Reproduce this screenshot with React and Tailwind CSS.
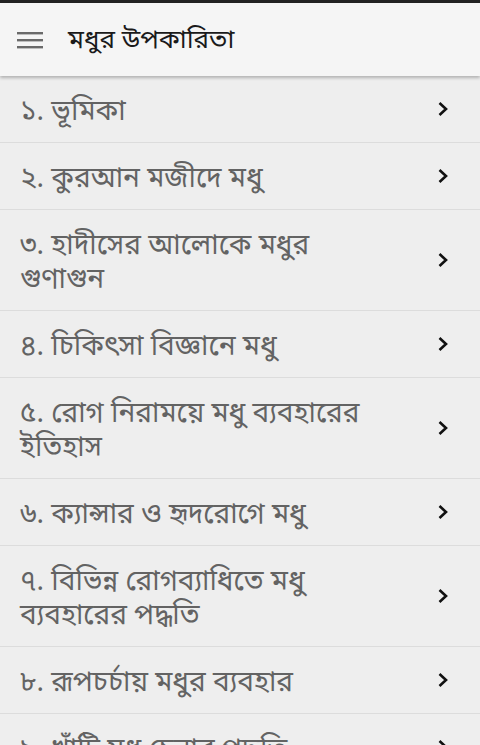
import React from "react";

const items = [
  "১. ভূমিকা",
  "২. কুরআন মজীদে মধু",
  "৩. হাদীসের আলোকে মধুর গুণাগুন",
  "৪. চিকিৎসা বিজ্ঞানে মধু",
  "৫. রোগ নিরাময়ে মধু ব্যবহারের ইতিহাস",
  "৬. ক্যান্সার ও হৃদরোগে মধু",
  "৭. বিভিন্ন রোগব্যাধিতে মধু ব্যবহারের পদ্ধতি",
  "৮. রূপচর্চায় মধুর ব্যবহার",
  "৯. খাঁটি মধু চেনার পদ্ধতি",
];

function Chevron() {
  return (
    <svg width="14" height="18" viewBox="0 0 14 18" className="shrink-0">
      <path d="M3.5 3 L10 9 L3.5 15" fill="none" stroke="#111" strokeWidth="2.6" strokeLinejoin="miter" />
    </svg>
  );
}

export default function App() {
  return (
    <div
      className="w-[480px] h-[745px] overflow-hidden bg-[#eeeeee]"
      style={{ fontFamily: '"Noto Sans", "Noto Sans Bengali", sans-serif' }}
    >
      <div className="h-[3px] bg-[#222]" />
      <header className="relative z-10 h-[73px] bg-[#f5f5f5] flex items-center shadow-[0_2px_3px_rgba(0,0,0,0.25)]">
        <div className="w-[70px] flex justify-center pl-[2px] pr-[12px]">
          <svg width="26" height="18" viewBox="0 0 26 18">
            <rect x="0" y="1" width="26" height="2.4" fill="#6a6a6a" />
            <rect x="0" y="8" width="26" height="2.4" fill="#6a6a6a" />
            <rect x="0" y="15" width="26" height="2.4" fill="#6a6a6a" />
          </svg>
        </div>
        <h1 className="text-[26px] text-[#1a1a1a] leading-none -ml-[2px] -mt-[3px]">মধুর উপকারিতা</h1>
      </header>
      <ul>
        {items.map((t, i) => (
          <li
            key={i}
            className="flex items-center justify-between pl-[20px] pr-[30px] py-[16px] border-b border-[#dcdcdc] min-h-[67px]"
          >
            <span className="text-[28px] leading-[34px] text-[#636363] max-w-[365px]">{t}</span>
            <Chevron />
          </li>
        ))}
      </ul>
    </div>
  );
}
